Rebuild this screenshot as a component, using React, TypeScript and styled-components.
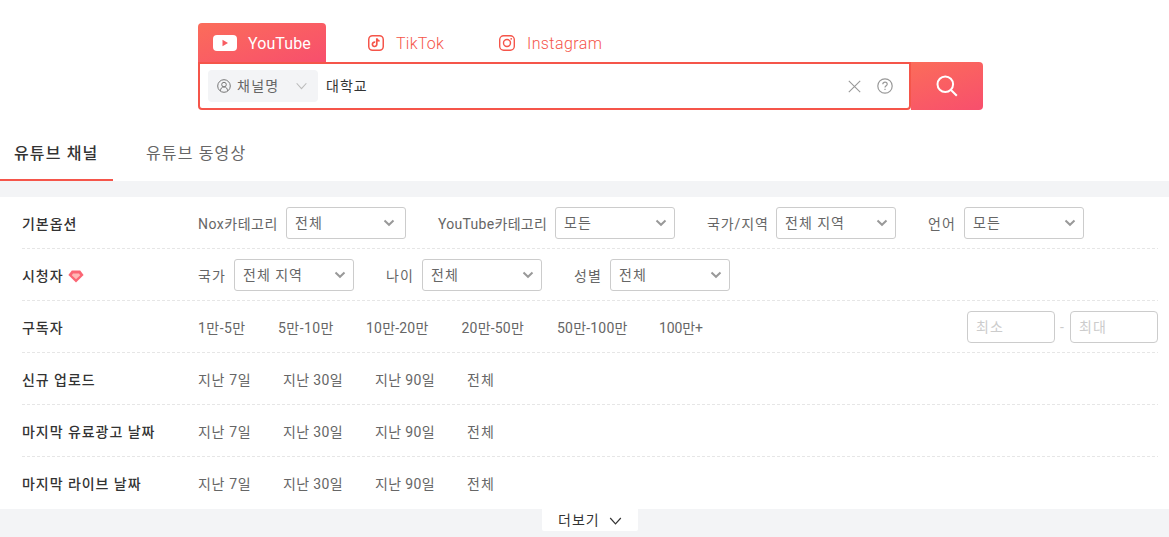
import React from 'react';
import styled, { createGlobalStyle, css } from 'styled-components';

const GlobalStyle = createGlobalStyle`
  * {
    box-sizing: border-box;
  }

  body {
    margin: 0;
    background: #fff;
    color: #333;
    font-family: Roboto, 'Noto Sans CJK KR', sans-serif;
    font-size: 14px;
    letter-spacing: 1px;
  }

  button,
  input {
    font: inherit;
    letter-spacing: inherit;
    color: inherit;
    border: none;
    background: none;
    padding: 0;
    outline: none;
  }
`;

const gradient = css`
  background: linear-gradient(160deg, #fb6b5b 5%, #f8506c 95%);
`;

const Page = styled.div`
  height: 537px;
  overflow: hidden;
  background: #f3f4f6;
`;

const Header = styled.header`
  height: 181px;
  background: #fff;
  padding-top: 23px;
`;

const Platforms = styled.nav`
  display: flex;
  height: 39px;
  margin-left: 198px;
`;

const Platform = styled.button<{ $active?: boolean; $width: number; $indent?: number; $space?: number }>`
  display: flex;
  align-items: center;
  width: ${({ $width }) => $width}px;
  padding: 2px 0 0 ${({ $indent = 15 }) => $indent}px;
  font-size: 16px;
  font-weight: 300;
  letter-spacing: ${({ $space = 0.25 }) => $space}px;
  color: #f5554a;
  border-radius: 4px 4px 0 0;
  white-space: nowrap;

  ${({ $active }) =>
    $active &&
    css`
      ${gradient}
      color: #fff;
      font-weight: 400;
    `}

  svg {
    flex: none;
    margin: 0 ${({ $active }) => ($active ? 11 : 12)}px 1px 0;
  }
`;

const SearchBar = styled.div`
  display: flex;
  width: 785px;
  height: 48px;
  margin-left: 198px;
`;

const SearchField = styled.div`
  display: flex;
  align-items: center;
  gap: 16px;
  width: 713px;
  padding: 0 16px 0 8px;
  border: 2px solid #f5554a;
  border-radius: 0 0 4px 4px;

  > svg {
    flex: none;
  }
`;

const SearchType = styled.button`
  display: flex;
  align-items: center;
  width: 110px;
  height: 32px;
  padding: 0 11px 0 9px;
  border-radius: 4px;
  background: #f3f4f6;
  color: #666;

  span {
    flex: 1;
    text-align: left;
    margin: 0 0 2px 6px;
    letter-spacing: 1.3px;
  }
`;

const SearchInput = styled.input`
  flex: 1;
  margin: 0 0 2px -8px;
  color: #333;
`;

const SearchButton = styled.button`
  ${gradient}
  display: flex;
  align-items: center;
  justify-content: center;
  width: 72px;
  border-radius: 0 4px 4px 0;
`;

const PageTabs = styled.nav`
  display: flex;
  height: 56px;
  margin-top: 15px;
`;

const PageTab = styled.button<{ $active?: boolean }>`
  width: ${({ $active }) => ($active ? 113 : 150)}px;
  padding-left: ${({ $active }) => ($active ? 14 : 33)}px;
  text-align: left;
  font-size: 16px;
  letter-spacing: 1.15px;
  color: ${({ $active }) => ($active ? '#333' : '#666')};
  font-weight: ${({ $active }) => ($active ? 500 : 400)};
  border-bottom: 2px solid ${({ $active }) => ($active ? '#f5554a' : 'transparent')};
`;

const Panel = styled.main`
  margin-top: 16px;
  padding: 0 11px 0 22px;
  background: #fff;
`;

const Row = styled.section`
  display: flex;
  align-items: center;
  height: 52px;
  color: #666;
  background: repeating-linear-gradient(90deg, #e6e6e6 0 3px, transparent 3px 5px) left bottom / 100% 1px no-repeat;

  &:last-child {
    background: none;
  }
`;

const RowTitle = styled.h3`
  display: flex;
  align-items: center;
  width: 176px;
  margin: 0;
  padding-bottom: 1px;
  font-size: 14px;
  font-weight: 500;
  letter-spacing: 0.95px;
  color: #333;

  svg {
    margin: 4px 0 0 4px;
  }
`;

const Fields = styled.div`
  display: flex;
  gap: 32px;
`;

const Field = styled.label`
  display: flex;
  align-items: center;
  gap: 8px;
`;

const FieldLabel = styled.span<{ $width: number; $space?: number }>`
  width: ${({ $width }) => $width}px;
  letter-spacing: ${({ $space = 1 }) => $space}px;
  white-space: nowrap;
`;

const SelectBox = styled.button<{ $inset?: number }>`
  display: flex;
  align-items: center;
  justify-content: space-between;
  width: 120px;
  height: 32px;
  padding: 0 ${({ $inset = 7 }) => $inset}px 0 8px;
  border: 1px solid #ccc;
  border-radius: 3px;

  span {
    margin-bottom: 2px;
  }
`;

const Chip = styled.button<{ $width: number; $space?: number }>`
  width: ${({ $width }) => $width}px;
  padding-bottom: 1px;
  letter-spacing: ${({ $space = 0.5 }) => $space}px;
  text-align: left;
  white-space: nowrap;
`;

const Range = styled.div`
  display: flex;
  align-items: center;
  margin-left: auto;
  color: #ccc;
`;

const RangeDash = styled.span`
  width: 15px;
  padding-left: 5px;
`;

const RangeInput = styled.input`
  width: 88px;
  height: 32px;
  padding: 0 8px;
  border: 1px solid #ccc;
  border-radius: 4px;

  &::placeholder {
    color: #ccc;
  }
`;

const MoreButton = styled.button`
  display: flex;
  align-items: center;
  justify-content: space-between;
  width: 96px;
  height: 22px;
  margin-left: 542px;
  padding: 0 16px;
  border-radius: 0 0 2px 2px;
  background: #fff;
  color: #333;

  span {
    margin-bottom: 3px;
  }

  svg {
    margin-top: 2px;
  }
`;

interface FieldData {
  label: string;
  value: string;
  width: number;
  space?: number;
  inset?: number;
}

const basicFields: FieldData[] = [
  { label: 'Nox카테고리', value: '전체', width: 80, space: 0.5, inset: 10 },
  { label: 'YouTube카테고리', value: '모든', width: 109, space: 0.3 },
  { label: '국가/지역', value: '전체 지역', width: 61, space: 0.9 },
  { label: '언어', value: '모든', width: 28 },
];

const audienceFields: FieldData[] = [
  { label: '국가', value: '전체 지역', width: 28 },
  { label: '나이', value: '전체', width: 28 },
  { label: '성별', value: '전체', width: 28 },
];

const subscribers = [
  { text: '1만-5만', width: 80, space: 0.45 },
  { text: '5만-10만', width: 88, space: 0.45 },
  { text: '10만-20만', width: 95.5, space: 0.2 },
  { text: '20만-50만', width: 95.5, space: 0.2 },
  { text: '50만-100만', width: 102, space: 0.2 },
  { text: '100만+', width: 60, space: -0.1 },
];

const periods = [
  { text: '지난 7일', width: 85, space: 0.65 },
  { text: '지난 30일', width: 92, space: 0.35 },
  { text: '지난 90일', width: 92, space: 0.35 },
  { text: '전체', width: 40, space: 1 },
];

const YouTubeIcon = () => (
  <svg width="24" height="16" viewBox="0 0 24 16">
    <rect width="24" height="16" rx="4" fill="#fff" />
    <path d="M9.5 4.7v6.6l5.5-3.3z" fill="#f85c62" />
  </svg>
);

const TikTokIcon = () => (
  <svg width="16" height="16" viewBox="0 0 16 16" fill="none" stroke="currentColor">
    <rect x=".75" y=".75" width="14.5" height="14.5" rx="3.8" strokeWidth="1.5" />
    <path d="M7.2 7.2a2.2 2.2 0 1 0 1.6 2.1V3.3c.2 1.6 1.2 2.5 2.8 2.6" strokeWidth="1.7" />
  </svg>
);

const InstagramIcon = () => (
  <svg width="16" height="16" viewBox="0 0 16 16" fill="none" stroke="currentColor" strokeWidth="1.4">
    <rect x=".7" y=".7" width="14.6" height="14.6" rx="4" />
    <circle cx="8" cy="8" r="3.5" />
    <circle cx="12.2" cy="3.8" r=".9" fill="currentColor" stroke="none" />
  </svg>
);

const UserIcon = () => (
  <svg width="14" height="14" viewBox="0 0 14 14" fill="none" stroke="#777">
    <circle cx="7" cy="7" r="6.3" />
    <circle cx="7" cy="5.6" r="2.3" />
    <path d="M3.5 11.8c0-2.4 1.4-3.9 3.5-3.9s3.5 1.5 3.5 3.9" />
  </svg>
);

const ThinChevron = ({ color = '#bbb', width = 11 }: { color?: string; width?: number }) => (
  <svg width={width} height="8" viewBox="0 0 12 8" fill="none" stroke={color} strokeWidth="1.2">
    <path d="M.7 1 6 6.8 11.3 1" />
  </svg>
);

const SelectChevron = () => (
  <svg width="12" height="8" viewBox="0 0 12 8" fill="none" stroke="#999" strokeWidth="2">
    <path d="M1.5 1.6 6 5.8l4.5-4.2" />
  </svg>
);

const ClearIcon = () => (
  <svg width="13" height="13" viewBox="0 0 13 13" stroke="#999" strokeWidth="1.1">
    <path d="m.8.8 11.4 11.4M12.2.8.8 12.2" />
  </svg>
);

const HelpIcon = () => (
  <svg width="16" height="16" viewBox="0 0 16 16" fill="none" stroke="#999" strokeWidth="1.2">
    <circle cx="8" cy="8" r="7.2" />
    <path d="M5.8 6.3c0-1.3.9-2.1 2.2-2.1s2.2.8 2.2 2c0 1.5-2.2 1.6-2.2 3.3" />
    <path d="M8 10.8v1.3" />
  </svg>
);

const SearchIcon = () => (
  <svg width="22" height="22" viewBox="0 0 22 22" fill="none" stroke="#fff" strokeWidth="2">
    <circle cx="9.3" cy="9.3" r="7.8" />
    <path d="m15 15 5.8 5.8" />
  </svg>
);

const GemIcon = () => (
  <svg width="16" height="13" viewBox="0 0 16 13">
    <path d="M3.8.5h8.4L15.6 5 8 12.6.4 5z" fill="#fb6674" />
    <path d="M5 3.6h6l1.2 1.6L8 9.2 3.8 5.2z" fill="#ffb8b5" />
  </svg>
);

const renderField = ({ label, value, width, space, inset }: FieldData) => (
  <Field key={label}>
    <FieldLabel $width={width} $space={space}>
      {label}
    </FieldLabel>
    <SelectBox $inset={inset}>
      <span>{value}</span>
      <SelectChevron />
    </SelectBox>
  </Field>
);

const renderChips = (items: { text: string; width: number; space: number }[]) =>
  items.map(({ text, width, space }) => (
    <Chip key={text} $width={width} $space={space}>
      {text}
    </Chip>
  ));

export default function App() {
  return (
    <>
      <GlobalStyle />
      <Page>
        <Header>
          <Platforms>
            <Platform $active $width={128} $space={0.1}>
              <YouTubeIcon />
              YouTube
            </Platform>
            <Platform $width={157} $indent={42}>
              <TikTokIcon />
              TikTok
            </Platform>
            <Platform $width={130} $indent={16} $space={0.4}>
              <InstagramIcon />
              Instagram
            </Platform>
          </Platforms>
          <SearchBar>
            <SearchField>
              <SearchType>
                <UserIcon />
                <span>채널명</span>
                <ThinChevron />
              </SearchType>
              <SearchInput defaultValue="대학교" />
              <ClearIcon />
              <HelpIcon />
            </SearchField>
            <SearchButton>
              <SearchIcon />
            </SearchButton>
          </SearchBar>
          <PageTabs>
            <PageTab $active>유튜브 채널</PageTab>
            <PageTab>유튜브 동영상</PageTab>
          </PageTabs>
        </Header>
        <Panel>
          <Row>
            <RowTitle>기본옵션</RowTitle>
            <Fields>{basicFields.map(renderField)}</Fields>
          </Row>
          <Row>
            <RowTitle>
              시청자
              <GemIcon />
            </RowTitle>
            <Fields>{audienceFields.map(renderField)}</Fields>
          </Row>
          <Row>
            <RowTitle>구독자</RowTitle>
            {renderChips(subscribers)}
            <Range>
              <RangeInput placeholder="최소" />
              <RangeDash>-</RangeDash>
              <RangeInput placeholder="최대" />
            </Range>
          </Row>
          <Row>
            <RowTitle>신규 업로드</RowTitle>
            {renderChips(periods)}
          </Row>
          <Row>
            <RowTitle>마지막 유료광고 날짜</RowTitle>
            {renderChips(periods)}
          </Row>
          <Row>
            <RowTitle>마지막 라이브 날짜</RowTitle>
            {renderChips(periods)}
          </Row>
        </Panel>
        <MoreButton>
          <span>더보기</span>
          <ThinChevron color="#333" width={13} />
        </MoreButton>
      </Page>
    </>
  );
}
